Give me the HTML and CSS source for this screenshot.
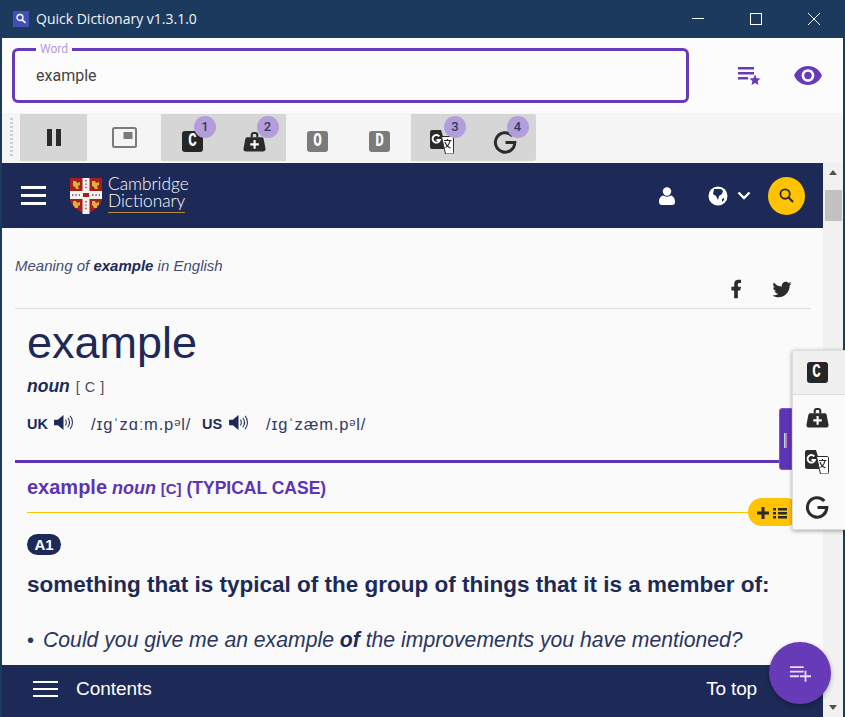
FILE: index.html
```html
<!DOCTYPE html>
<html lang="en">
<head>
<meta charset="utf-8">
<title>Quick Dictionary</title>
<link rel="stylesheet" href="styles.css">
</head>
<body>
<div class="window">
  <header class="titlebar">
    <svg class="app-icon" viewBox="0 0 16 16"><rect width="16" height="16" fill="#3f51b5"/><circle cx="7" cy="6.500" r="3" fill="none" stroke="#fff" stroke-width="1.300"/><path d="M9.200 8.800l3.300 3" stroke="#fff" stroke-width="1.600"/></svg>
    <span class="app-title">Quick Dictionary v1.3.1.0</span>
    <div class="win-controls">
      <button class="win-btn"><svg viewBox="0 0 12 12"><path d="M0 5.500h12" stroke="#fff"/></svg></button>
      <button class="win-btn"><svg viewBox="0 0 12 12"><rect x=".5" y=".5" width="11" height="11" fill="none" stroke="#fff"/></svg></button>
      <button class="win-btn"><svg viewBox="0 0 12 12"><path d="M0 0l12 12M12 0L0 12" stroke="#fff"/></svg></button>
    </div>
  </header>

  <section class="searchbar">
    <div class="word-field">
      <span class="word-label">Word</span>
      <span class="word-value">example</span>
    </div>
    <svg class="action-list" viewBox="0 0 24 21"><path d="M1 2h16v2.500H1zM1 7h16v2.500H1zM1 12h10v2.500H1z" fill="#673ab7"/><path d="M18 9.500l1.600 3.700 4 .3-3 2.600.9 3.900-3.500-2.100-3.500 2.100.9-3.900-3-2.600 4-.3z" fill="#673ab7"/></svg>
    <svg class="action-eye" viewBox="1 4.500 22 15"><path fill="#673ab7" d="M12 4.500C7 4.500 2.730 7.610 1 12c1.730 4.390 6 7.500 11 7.500s9.270-3.110 11-7.500c-1.730-4.390-6-7.500-11-7.500zM12 17c-2.760 0-5-2.240-5-5s2.240-5 5-5 5 2.240 5 5-2.240 5-5 5zm0-8c-1.660 0-3 1.340-3 3s1.340 3 3 3 3-1.340 3-3-1.340-3-3-3z"/></svg>
  </section>

  <nav class="toolbar">
    <div class="grip"></div>
    <div class="tool tool-narrow on">
      <svg class="ico-pause" viewBox="0 0 14 17"><path d="M0 0h5v17H0zM9 0h5v17H9z" fill="#2b2b2b"/></svg>
    </div>
    <div class="tool tool-wide">
      <svg class="ico-pip" viewBox="0 0 25 21"><rect x="1" y="1" width="23" height="19" rx="1.500" fill="none" stroke="#7b7b7b" stroke-width="2"/><rect x="11.500" y="5" width="9" height="7" fill="#7b7b7b"/></svg>
    </div>
    <div class="tool on">
      <span class="letter dark"><span>C</span></span><span class="badge">1</span>
    </div>
    <div class="tool on">
      <svg class="ico-bag" viewBox="0 0 24 21"><path fill="#2b2b2b" d="M8 6V3.500C8 1.800 9.300.5 11 .5h2c1.700 0 3 1.300 3 3V6h-2.200V3.500c0-.5-.3-.8-.8-.8h-2c-.5 0-.8.300-.8.800V6z"/><path fill="#2b2b2b" d="M4.500 6h15c1 0 1.800.7 2 1.700L23.500 18c.2 1.500-.8 3-2.500 3H3c-1.700 0-2.700-1.500-2.500-3L2.500 7.700C2.700 6.700 3.500 6 4.500 6z"/><path fill="#fff" d="M11 9h2.200v3.400h3.300v2.200h-3.300V18H11v-3.400H7.600v-2.200H11z"/></svg>
      <span class="badge">2</span>
    </div>
    <div class="tool"><span class="letter grey"><span>O</span></span></div>
    <div class="tool"><span class="letter grey"><span>D</span></span></div>
    <div class="tool on">
      <svg class="ico-gt" viewBox="0 0 24 24"><path fill="#2b2b2b" d="M2 0h9l6 19H2c-1 0-2-1-2-2V2c0-1 1-2 2-2z"/><path d="M9.300 6.300A3.800 3.800 0 1 0 10 10H6.500" fill="none" stroke="#fff" stroke-width="1.900"/><path d="M11.500 6.500h10.500c1 0 1.500.5 1.500 1.500v14.500c0 1-.5 1.500-1.500 1.500h-6.500z" fill="#fff" stroke="#2b2b2b" stroke-width="1"/><path d="M14 10.500h7.500M17.500 9v1.500M20 10.500c-.7 3.500-2 5.500-4.500 7M15 12c1 3 3 5 5.500 6" fill="none" stroke="#2b2b2b" stroke-width="1.200"/></svg>
      <span class="badge">3</span>
    </div>
    <div class="tool on">
      <svg class="ico-g" viewBox="0 0 24 24"><path d="M19.300 5.900A9.700 9.700 0 1 0 21.800 12.500H12.500" fill="none" stroke="#2b2b2b" stroke-width="3"/></svg>
      <span class="badge">4</span>
    </div>
  </nav>

  <main class="browser">
    <div class="page">
      <div class="cd-header">
        <div class="burger"><i></i><i></i><i></i></div>
        <svg class="crest" viewBox="0 0 32 36">
          <path d="M0 0h32v20c0 8-8 13-16 16C8 33 0 28 0 20z" fill="#a3201f"/>
          <path d="M12.500 0h7v36h-7zM0 13h32v8H0z" fill="#f4f2ee"/>
          <path d="M13 15h6v4h-6z" fill="#a3201f"/>
          <path d="M3 3h3l1 2 3-1v3l-2 1 1 3H6L5 9 3 8zM22 3h3l1 2 3-1v3l-2 1 1 3h-3l-1-2-2-1zM3 23h3l1 2 3-1v3l-2 1 0 2H5l-1-2-1-1zM22 23h3l1 2 3-1v3l-2 1 0 2h-3l-1-2-1-1z" fill="#d9b13b"/>
          <path d="M16 2v9M16 23v10M2 17h8M22 17h8" stroke="#555" stroke-width="1.400" stroke-dasharray="1.400 2"/>
        </svg>
        <div class="cd-logo">
          <span>Cambridge</span>
          <span class="cd-logo-2">Dictionary</span>
        </div>
        <svg class="ico-user" viewBox="0 0 16 18"><circle cx="8" cy="4.500" r="4.200" fill="#fff"/><path d="M0 15c0-4 2-6 4-6.500 2.500 1.500 5.500 1.500 8 0 2 .5 4 2.500 4 6.500 0 2-1 3-3 3H3c-2 0-3-1-3-3z" fill="#fff"/></svg>
        <svg class="ico-globe" viewBox="0 0 20 20"><circle cx="10" cy="10" r="9.500" fill="#fff"/><path d="M6 3h7l2 2-1 3-3 2-1 4-2-4-3-2z M14 13l2-1 0 2-2 2z" fill="#1d2a57"/></svg>
        <svg class="ico-chev" viewBox="0 0 14 9"><path d="M1.500 1.500L7 7l5.500-5.500" fill="none" stroke="#fff" stroke-width="2.400"/></svg>
        <div class="cd-search"><svg viewBox="0 0 16 16"><circle cx="6.500" cy="6.500" r="5" fill="none" stroke="#2b2b2b" stroke-width="2"/><path d="M10.200 10.200L15 15" stroke="#2b2b2b" stroke-width="2.200"/></svg></div>
      </div>

      <div class="entry">
        <p class="meaning">Meaning of <b>example</b> in English</p>
        <div class="share">
          <svg viewBox="0 0 24 24"><path fill="#2b2b2b" d="M14 13.500h2.500l1-4H14v-2c0-1.030 0-2 2-2h1.500V2.140c-.326-.043-1.557-.14-2.857-.14C11.928 2 10 3.657 10 6.700v2.800H7v4h3V22h4v-8.500z"/></svg>
          <svg viewBox="0 0 24 24"><path fill="#2b2b2b" d="M22.460 6C21.690 6.350 20.860 6.580 20 6.690C20.880 6.160 21.560 5.320 21.880 4.310C21.050 4.810 20.130 5.160 19.160 5.360C18.370 4.500 17.260 4 16 4C13.650 4 11.730 5.920 11.730 8.290C11.730 8.630 11.770 8.960 11.840 9.270C8.280 9.090 5.110 7.380 3 4.790C2.630 5.420 2.420 6.160 2.420 6.940C2.420 8.430 3.170 9.750 4.330 10.500C3.620 10.500 2.960 10.300 2.380 10C2.380 10 2.380 10 2.380 10.030C2.380 12.110 3.860 13.850 5.820 14.240C5.460 14.340 5.080 14.390 4.690 14.390C4.420 14.390 4.150 14.360 3.890 14.310C4.430 16 6 17.260 7.890 17.290C6.430 18.450 4.580 19.130 2.560 19.130C2.220 19.130 1.880 19.110 1.540 19.070C3.440 20.290 5.700 21 8.120 21C16 21 20.330 14.460 20.330 8.790C20.330 8.600 20.330 8.420 20.320 8.230C21.160 7.630 21.880 6.870 22.460 6Z"/></svg>
        </div>
        <div class="headblock">
          <h1 class="headword">example</h1>
          <div class="pos"><b>noun</b> <span class="gram">[ C ]</span></div>
          <div class="pron">
            <span class="region">UK</span>
            <svg class="speaker" viewBox="0 0 20 18"><path d="M0 6h4l6-5v16l-6-5H0z" fill="#1d2a57"/><path d="M12 6c1.300 1.500 1.300 4.500 0 6M14.500 4c2.300 3 2.300 7 0 10M17 2c3.300 4 3.300 10 0 14" fill="none" stroke="#1d2a57" stroke-width="1.100"/></svg>
            <span class="ipa ipa-uk">/ɪɡˈzɑːm.pᵊl/</span>
            <span class="region">US</span>
            <svg class="speaker" viewBox="0 0 20 18"><path d="M0 6h4l6-5v16l-6-5H0z" fill="#1d2a57"/><path d="M12 6c1.300 1.500 1.300 4.500 0 6M14.500 4c2.300 3 2.300 7 0 10M17 2c3.300 4 3.300 10 0 14" fill="none" stroke="#1d2a57" stroke-width="1.100"/></svg>
            <span class="ipa">/ɪɡˈzæm.pᵊl/</span>
          </div>
        </div>
        <div class="sense">
          <div class="sense-title"><b class="sw">example</b> <i>noun</i> <span class="sg">[C]</span> <b>(TYPICAL CASE)</b></div>
        </div>
        <div class="def-block">
          <span class="level">A1</span>
          <p class="def">something that is typical of the group of things that it is a member of:</p>
          <p class="eg"><span class="bullet">•</span>Could you give me an example <b>of</b> the improvements you have mentioned?</p>
        </div>
      </div>

      <div class="cd-footer">
        <div class="burger burger-small"><i></i><i></i><i></i></div>
        <span class="contents">Contents</span>
        <span class="totop">To top</span>
        <span class="totop-circle"></span>
      </div>
    </div>
    <div class="scrollbar">
      <span class="arrow-up"></span>
      <span class="thumb"></span>
      <span class="arrow-down"></span>
    </div>

    <div class="purple-tab"><i></i></div>
    <div class="yellow-pill">
      <svg viewBox="0 0 30 14"><path d="M4.500 1h3v4.500H12v3H7.500V13h-3V8.500H0v-3h4.500zM16 2h3v2.500h-3zM21 2h9v2.500h-9zM16 6h3v2.500h-3zM21 6h9v2.500h-9zM16 10h3v2.500h-3zM21 10h9v2.500h-9z" fill="#2b2b2b"/></svg>
    </div>
    <div class="tray">
      <div class="tray-item selected"><span class="letter dark"><span>C</span></span></div>
      <div class="tray-item">
        <svg class="ico-bag" viewBox="0 0 24 21"><path fill="#2b2b2b" d="M8 6V3.500C8 1.800 9.300.5 11 .5h2c1.700 0 3 1.300 3 3V6h-2.200V3.500c0-.5-.3-.8-.8-.8h-2c-.5 0-.8.300-.8.800V6z"/><path fill="#2b2b2b" d="M4.500 6h15c1 0 1.800.7 2 1.700L23.500 18c.2 1.500-.8 3-2.500 3H3c-1.700 0-2.700-1.500-2.500-3L2.500 7.700C2.700 6.700 3.500 6 4.500 6z"/><path fill="#fff" d="M11 9h2.200v3.400h3.300v2.200h-3.300V18H11v-3.400H7.600v-2.200H11z"/></svg>
      </div>
      <div class="tray-item">
        <svg class="ico-gt" viewBox="0 0 24 24"><path fill="#2b2b2b" d="M2 0h9l6 19H2c-1 0-2-1-2-2V2c0-1 1-2 2-2z"/><path d="M9.300 6.300A3.800 3.800 0 1 0 10 10H6.500" fill="none" stroke="#fff" stroke-width="1.900"/><path d="M11.500 6.500h10.500c1 0 1.500.5 1.500 1.500v14.500c0 1-.5 1.500-1.500 1.500h-6.500z" fill="#fff" stroke="#2b2b2b" stroke-width="1"/><path d="M14 10.500h7.500M17.500 9v1.500M20 10.500c-.7 3.500-2 5.500-4.500 7M15 12c1 3 3 5 5.500 6" fill="none" stroke="#2b2b2b" stroke-width="1.200"/></svg>
      </div>
      <div class="tray-item">
        <svg class="ico-g" viewBox="0 0 24 24"><path d="M19.300 5.900A9.700 9.700 0 1 0 21.800 12.500H12.500" fill="none" stroke="#2b2b2b" stroke-width="3"/></svg>
      </div>
    </div>
    <div class="fab">
      <svg viewBox="0 0 24 18"><path d="M1 1h15v2H1zM1 6h15v2H1zM1 11h10v2H1zM17 6h2v5h5v2h-5v5h-2v-5h-5v-2h5z" fill="#e6def5"/></svg>
    </div>
  </main>
</div>
</body>
</html>
```

FILE: styles.css
```css
* { box-sizing: border-box; }
html, body { margin: 0; height: 100%; }
body { background: #1b3a5e; overflow: hidden; }

.window {
  height: 717px;
  width: 845px;
  display: flex;
  flex-direction: column;
  overflow: hidden;
}

/* title bar */
.titlebar {
  height: 38px;
  flex: none;
  display: flex;
  align-items: center;
  padding-left: 13px;
  background: #1b3a5e;
}
.app-icon { width: 16px; height: 16px; margin-top: -1px; }
.app-title {
  margin-left: 7px;
  font: 14px "Open Sans", sans-serif;
  color: #f2f5f8;
  margin-top: -1px;
}
.win-controls { margin-left: auto; display: flex; margin-right: 2px; }
.win-btn {
  width: 58px;
  height: 38px;
  padding: 0;
  border: 0;
  background: none;
  display: flex;
  align-items: center;
  justify-content: center;
}
.win-btn svg { width: 12px; height: 12px; margin-top: -1px; }

/* search */
.searchbar {
  height: 75px;
  flex: none;
  margin: 0 2px;
  background: #fcfcfc;
  display: flex;
  align-items: center;
  padding-left: 10px;
}
.word-field {
  position: relative;
  width: 677px;
  height: 55px;
  border: 3px solid #673ab7;
  border-radius: 6px;
  display: flex;
  align-items: center;
  padding-left: 21px;
}
.word-label {
  position: absolute;
  left: 21px;
  top: -8px;
  padding: 0 4px;
  background: #fcfcfc;
  font: 12px Roboto, sans-serif;
  line-height: 12px;
  color: #b39ddb;
}
.word-value { font: 16px Roboto, sans-serif; color: #444; }
.action-list { width: 24px; height: 21px; margin-left: 48px; }
.action-eye { width: 28px; height: 19px; margin-left: 33px; }

/* toolbar */
.toolbar {
  height: 50px;
  flex: none;
  margin: 0 2px;
  padding: 1px 0 2px 8px;
  background: #f5f5f5;
  display: flex;
}
.grip {
  width: 3px;
  margin: 4px 7px 3px 0;
  background: repeating-linear-gradient(#cfcfcf 0 2px, transparent 2px 4px);
}
.tool {
  position: relative;
  width: 62.500px;
  display: flex;
  align-items: center;
  justify-content: center;
  padding-top: 8px;
}
.tool.tool-narrow { width: 67px; padding-top: 0; }
.tool.tool-wide { width: 74px; padding-top: 0; }
.tool.on { background: #d6d6d6; }
.toolbar .tool:last-child { border-radius: 0 2px 2px 0; }
.ico-pause { width: 14px; height: 17px; margin-top: -1px; }
.ico-pip { width: 25px; height: 21px; margin-top: -1px; }
.ico-bag { width: 23px; height: 21px; }
.ico-gt { width: 24px; height: 24px; }
.ico-g { width: 24px; height: 24px; }
.letter {
  width: 21px;
  height: 21px;
  border-radius: 3px;
  display: flex;
  align-items: center;
  justify-content: center;
  font: bold 15px "Liberation Mono", monospace;
  color: #fff;
}
.letter span { display: block; transform: scale(.95, 1.3); }
.letter.dark { background: #262626; }
.letter.grey { background: #7b7b7b; }
.badge {
  position: absolute;
  top: 2px;
  left: 33px;
  width: 22px;
  height: 22px;
  border-radius: 50%;
  background: #b39ddb;
  color: #333a60;
  font: 500 13px/21px Roboto, sans-serif;
  text-align: center;
}

/* browser area */
.browser {
  position: relative;
  flex: 1;
  min-height: 0;
  margin: 0 2px;
  display: flex;
  background: #fafafa;
}
.page {
  flex: 1;
  min-width: 0;
  display: flex;
  flex-direction: column;
  color: #1d2a57;
  font-family: "Liberation Sans", Arial, sans-serif;
}
.cd-header {
  height: 65px;
  flex: none;
  background: #1d2a57;
  display: flex;
  align-items: center;
  padding-left: 19px;
}
.burger { display: flex; flex-direction: column; gap: 5px; width: 25px; }
.burger i { display: block; height: 3px; background: #fff; }
.burger-small i { height: 2px; }
.burger-small { gap: 5px; }
.crest { width: 32px; height: 36px; margin-left: 24px; }
.cd-logo {
  margin-left: 6px;
  margin-top: -3px;
  font: 300 17.300px/17px Lato, sans-serif;
  color: #fff;
  display: flex;
  flex-direction: column;
  align-items: flex-start;
}
.cd-logo-2 { border-bottom: 1px solid #b58a3a; padding-bottom: 3px; }
.ico-user { width: 16px; height: 18px; margin-left: 470px; }
.ico-globe { width: 20px; height: 20px; margin-left: 33px; }
.ico-chev { width: 14px; height: 9px; margin-left: 9px; }
.cd-search {
  width: 37px;
  height: 38px;
  margin-left: 17px;
  border-radius: 50%;
  background: #ffc300;
  display: flex;
  align-items: center;
  justify-content: center;
}
.cd-search svg { width: 15px; height: 15px; }

.entry {
  flex: 1;
  min-height: 0;
  overflow: hidden;
  padding: 0 12px 0 13px;
}
.meaning {
  margin: 30px 0 0;
  font: italic 15px/16px "Liberation Sans", sans-serif;
  color: #444d70;
}
.meaning b { color: #1d2a57; }
.share {
  display: flex;
  justify-content: flex-end;
  gap: 24px;
  padding: 0 18px 0 0;
  margin-top: 4px;
  height: 31px;
  border-bottom: 1px solid #ddd;
}
.share svg { width: 22px; height: 22px; }
.headblock { padding-left: 12px; }
.headword {
  margin: 8px 0 0;
  font: 400 45px/52px "Liberation Sans", sans-serif;
}
.pos { margin-top: 7px; height: 20px; font: 17.500px/20px "Liberation Sans", sans-serif; }
.pos b { font-style: italic; }
.gram { font-size: 14.500px; color: #4a4f68; margin-left: 1px; word-spacing: 1px; }
.pron {
  display: flex;
  align-items: center;
  margin-top: 17px;
  height: 22px;
  font-size: 16px;
}
.region { font-weight: bold; font-size: 14.500px; width: 21px; }
.speaker { width: 19px; height: 17px; margin-left: 6px; margin-top: -3px; }
.ipa {
  margin-left: 18px;
  font-family: "Liberation Sans", "DejaVu Sans", sans-serif;
  font-size: 16.500px;
  letter-spacing: .85px;
  color: #333c63;
  white-space: nowrap;
}
.ipa-uk { margin-right: 11px; }
.sense {
  margin-top: 25px;
  border-top: 3px solid #5d34b5;
  margin-right: 31px;
}
.sense-title {
  margin-right: -2px;
  padding: 14px 0 0 12px;
  height: 49px;
  color: #5d34b5;
  font-size: 17.500px;
  line-height: 20px;
  position: relative;
}
.sense-title::after {
  content: "";
  position: absolute;
  left: 12px;
  right: 0;
  top: 49px;
  border-top: 1px solid #ffc300;
}
.sw { font-size: 20px; }
.sense-title i { font-weight: bold; font-size: 18px; }
.sg { font-size: 15px; font-weight: bold; }
.def-block { padding-left: 12px; margin-top: 1px; }
.level {
  display: inline-block;
  margin-top: 21px;
  width: 34px;
  height: 21px;
  border-radius: 11px;
  background: #1d2a57;
  color: #fff;
  font: bold 15px/21px "Liberation Sans", sans-serif;
  text-align: center;
}
.def { margin: 16px 0 0; font: bold 22.500px/28px "Liberation Sans", sans-serif; white-space: nowrap; }
.eg { margin: 28px 0 0; font: italic 21.200px/26px "Liberation Sans", sans-serif; white-space: nowrap; color: #2a3560; }
.eg b { color: #1d2a57; }
.bullet { font-style: normal; font-size: 20px; margin-right: 9px; }

.cd-footer {
  height: 52px;
  flex: none;
  background: #1d2a57;
  color: #fff;
  display: flex;
  align-items: center;
  padding: 0 0 4px 31px;
  font-size: 19px;
}
.contents { margin-left: 18px; letter-spacing: -.05px; }
.totop { margin-left: auto; margin-right: 16px; letter-spacing: -.15px; }
.totop-circle {
  width: 34px;
  height: 34px;
  border-radius: 50%;
  background: #c9c9c9;
  margin: 0 16px 14px 0;
}

/* scrollbar */
.scrollbar {
  position: relative;
  width: 20px;
  flex: none;
  background: #f1f1f1;
}
.arrow-up, .arrow-down {
  position: absolute;
  left: 6px;
  width: 0;
  height: 0;
  border: 4.500px solid transparent;
}
.arrow-up { top: 3px; border-bottom: 5px solid #505050; }
.arrow-down { bottom: 3px; border-top: 5px solid #505050; }
.thumb {
  position: absolute;
  top: 27px;
  left: 2px;
  width: 17px;
  height: 31px;
  background: #c1c1c1;
}

/* overlays */
.purple-tab {
  position: absolute;
  left: 777px;
  top: 245px;
  width: 13px;
  height: 62px;
  background: #5d34b5;
  border: 1px solid #7a5cc4;
  border-radius: 3px 0 0 3px;
}
.purple-tab i {
  position: absolute;
  left: 4px;
  top: 24px;
  width: 3px;
  height: 15px;
  background: linear-gradient(90deg, #a8e0ff 50%, #e070b8 50%);
}
.yellow-pill {
  position: absolute;
  left: 746px;
  top: 335px;
  width: 52px;
  height: 28px;
  border-radius: 14px;
  background: #ffc300;
  padding: 8px 0 0 9px;
}
.yellow-pill svg { display: block; width: 30px; height: 14px; }
.tray {
  position: absolute;
  left: 790px;
  top: 187px;
  width: 55px;
  height: 180px;
  background: #fafafa;
  border: 1px solid #ddd;
  border-right: 0;
  box-shadow: 0 1px 4px rgba(0,0,0,.35);
  border-radius: 2px 0 0 2px;
  display: flex;
  flex-direction: column;
}
.tray-item {
  height: 45px;
  display: flex;
  align-items: center;
  justify-content: center;
  padding-right: 6px;
}
.tray-item.selected { height: 44px; background: #f0f0f0; border-bottom: 1px solid #ddd; }
.fab {
  position: absolute;
  left: 767px;
  top: 479px;
  width: 62px;
  height: 62px;
  border-radius: 50%;
  background: #673ab7;
  box-shadow: 0 2px 5px rgba(0,0,0,.3);
  display: flex;
  align-items: center;
  justify-content: center;
}
.fab svg { width: 22px; height: 17px; }
```
